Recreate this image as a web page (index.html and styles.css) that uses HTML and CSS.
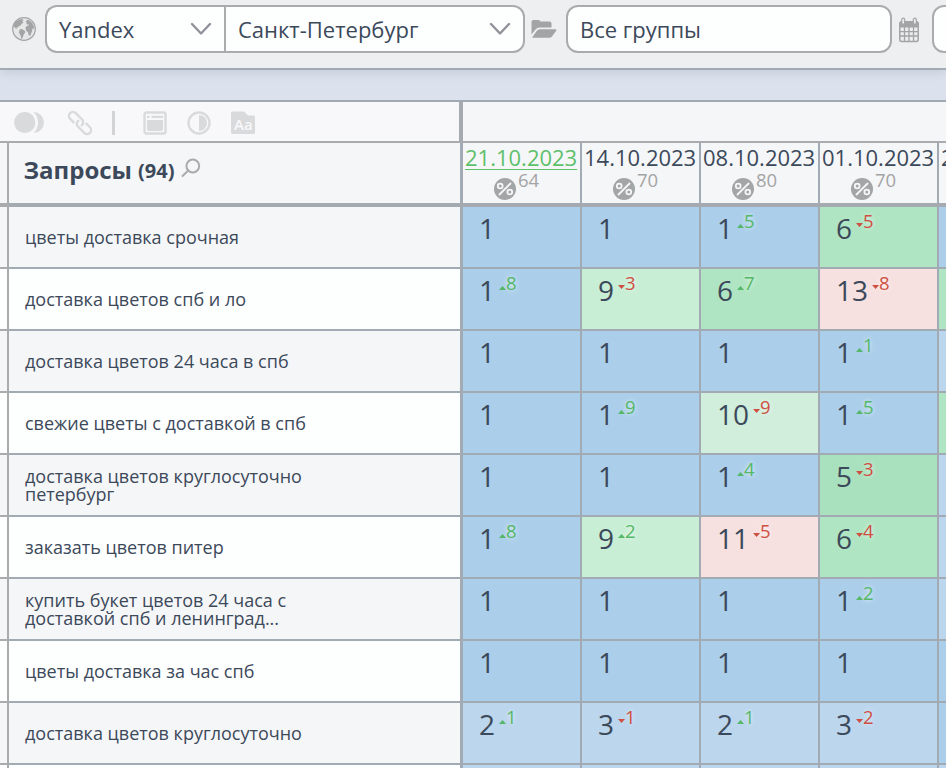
FILE: index.html
```
<!DOCTYPE html>
<html lang="ru">
<head>
    <meta charset="UTF-8">
    <meta name="viewport" content="width=device-width, initial-scale=1.0">
    <title>Позиции сайта</title>
    <link rel="stylesheet" href="styles.css">
</head>
<body>
    <header class="filters">
        <svg class="icon-globe" width="24" height="24" viewBox="0 0 24 24">
            <circle cx="12" cy="12" r="11.3" fill="#e6e6e7" stroke="#a3a4a5" stroke-width="1.2"/>
            <path fill="#a3a4a5" d="M1.500 8.500 4 4.600 7.500 2.500l3-.5 1 1.200-1.400.8 1.400 1.400-1.600 1.200-1.400 2-1.800.6-.8 1.600-1.500-.8.5 2L4 11.400 2.200 10zM7.600 12.600l2.200-.6 2.600 1.600 1 1.500-1.700 2.300-.8 2.500-1.300 2.500-1-4-1.600-3zM14 4.600l1.200-1.800 2.300.6 2.700 2.600 1.700 3.400.4 2.400-1.600-.6-.8 3.200-1.500 4-1.600.2-.8-3.400-2-1.800-.5-2.700 1.600-1.900 1.800-.4-.2-1-1.700.2z"/>
        </svg>
        <div class="select-group">
            <div class="select engine">
                <span>Yandex</span>
                <svg width="22" height="14" viewBox="0 0 22 14"><path d="M2 2l9 9.500L20 2"/></svg>
            </div>
            <div class="select region">
                <span>Санкт-Петербург</span>
                <svg width="22" height="14" viewBox="0 0 22 14"><path d="M2 2l9 9.500L20 2"/></svg>
            </div>
        </div>
        <svg class="icon-folder" width="26" height="20" viewBox="0 0 26 20">
            <path fill="#a3a4a5" d="M.5 15.500V3a2 2 0 0 1 2-2h5a2 2 0 0 1 2 1.600h9A2 2 0 0 1 20.500 4.600V8.500H8.500a5 5 0 0 0-4 2z"/>
            <path fill="#a3a4a5" d="M1.200 18.500 5.500 12.300a4.500 4.500 0 0 1 3.600-2H24.500a.9.900 0 0 1 .7 1.500L21 17.500a3.500 3.500 0 0 1-2.600 1.200H1.500z"/>
        </svg>
        <div class="select groups"><span>Все группы</span></div>
        <svg class="icon-calendar" width="20" height="26" viewBox="0 0 20 26">
            <rect x=".8" y="4.800" width="18.400" height="19.600" rx="1.800" fill="#ededee" stroke="#a3a4a5" stroke-width="1.500"/>
            <path d="M.8 5h18.400v5.500H.8z" fill="#a3a4a5"/>
            <path d="M1 14.700h18M1 19h18M5.500 10v14M10 10v14M14.500 10v14" stroke="#a3a4a5" stroke-width="1.300"/>
            <rect x="2.700" y="1.200" width="3" height="6" rx="1.500" fill="#ededee" stroke="#a3a4a5" stroke-width="1.200"/>
            <rect x="14.300" y="1.200" width="3" height="6" rx="1.500" fill="#ededee" stroke="#a3a4a5" stroke-width="1.200"/>
        </svg>
        <div class="select dates"></div>
    </header>

    <main class="report">
        <div class="toolbar">
            <div class="tools">
                <svg class="tool-toggle" width="31" height="24" viewBox="0 0 31 24">
                    <circle cx="10.800" cy="11.500" r="10.600"/>
                    <path d="M19.500 1a10.500 10.500 0 0 1 0 21c6-5.500 6-15.500 0-21z"/>
                </svg>
                <svg class="tool-link" width="26" height="26" viewBox="0 0 26 26">
                    <g class="line" transform="rotate(45 13 13)">
                        <path d="M8 17H3a4 4 0 0 1 0-8h9a4 4 0 0 1 3.800 4.500"/>
                        <path d="M18 9h5a4 4 0 0 1 0 8h-9a4 4 0 0 1-3.800-4.500"/>
                    </g>
                </svg>
                <span class="divider"></span>
                <svg class="tool-window" width="24" height="24" viewBox="0 0 24 24">
                    <rect class="line" x="1.500" y="1.500" width="21" height="21" rx="2"/>
                    <path d="M4 4.800h2.500v2.200H4zM8.500 4.800H20v2.200H8.500zM4 9h16v9a2 2 0 0 1-2 2H6a2 2 0 0 1-2-2z"/>
                </svg>
                <svg class="tool-contrast" width="24" height="24" viewBox="0 0 24 24">
                    <circle class="line" cx="12" cy="12" r="10.500"/>
                    <path d="M12 4a8 8 0 0 1 0 16z"/>
                </svg>
                <svg class="tool-case" width="24" height="24" viewBox="0 0 24 24">
                    <path d="M0 2a1.500 1.500 0 0 1 1.500-1.500H13L17 4.500h5.500A1.500 1.500 0 0 1 24 6v15.500a1.500 1.500 0 0 1-1.500 1.500h-21A1.500 1.500 0 0 1 0 21.500z"/>
                    <text x="3" y="18.500">Aa</text>
                </svg>
            </div>
        </div>

        <div class="row head">
            <div class="gutter"></div>
            <div class="query">
                <span class="title">Запросы</span>
                <span class="count">(94)</span>
                <svg class="icon-search" width="20" height="20" viewBox="0 0 20 20">
                    <circle cx="11.800" cy="8" r="6.400"/><path d="M7.300 12.500 1.500 18"/>
                </svg>
            </div>
        </div>
    </main>

    <script>
        const dates = [
            ['21.10.2023', 64], ['14.10.2023', 70], ['08.10.2023', 80],
            ['01.10.2023', 70], ['24.09.2023', '']
        ];

        // cell: [position, change, colour class]
        const rows = [
            ['цветы доставка срочная', [[1], [1], [1, 5], [6, -5, 'g1'], ['']]],
            ['доставка цветов спб и ло', [[1, 8], [9, -3, 'g2'], [6, 7, 'g1'], [13, -8, 'red'], ['', 0, 'g1']]],
            ['доставка цветов 24 часа в спб', [[1], [1], [1], [1, 1], ['', 0, 'b2']]],
            ['свежие цветы с доставкой в спб', [[1], [1, 9], [10, -9, 'g3'], [1, 5], ['', 0, 'g1']]],
            ['доставка цветов круглосуточно<br>петербург', [[1], [1], [1, 4], [5, -3, 'g0'], ['', 0, 'b2']]],
            ['заказать цветов питер', [[1, 8], [9, 2, 'g2'], [11, -5, 'red'], [6, -4, 'g1'], ['', 0, 'b2']]],
            ['купить букет цветов 24 часа с<br>доставкой спб и ленинград...', [[1], [1], [1], [1, 2], ['', 0, 'b2']]],
            ['цветы доставка за час спб', [[1], [1], [1], [1], ['']]],
            ['доставка цветов круглосуточно', [[2, 1, 'b2'], [3, -1, 'b2'], [2, 1, 'b2'], [3, -2, 'b2'], ['']]],
            ['', [['', 0, 'b2'], ['', 0, 'b2'], ['', 0, 'b2'], ['', 0, 'b2'], ['', 0, 'b2']]]
        ];

        const percent = '<svg class="percent" width="22" height="22" viewBox="0 0 22 22">' +
            '<circle class="disc" cx="11" cy="11" r="11"/>' +
            '<circle cx="6.200" cy="8" r="2.400"/><circle cx="15.800" cy="14" r="2.400"/>' +
            '<path d="M16.500 5.500 5.500 16.500"/></svg>';

        document.querySelector('.head').insertAdjacentHTML('beforeend', dates.map(([date, value], i) =>
            `<div class="date${i === 0 ? ' active' : ''}"><span class="day">${date}</span>
            <div class="visibility">${percent}<span>${value}</span></div></div>`
        ).join(''));

        const change = (n) => n
            ? `<span class="change ${n > 0 ? 'up' : 'down'}"><i></i>${Math.abs(n)}</span>`
            : '';

        document.querySelector('.report').insertAdjacentHTML('beforeend', rows.map(([name, cells]) =>
            `<div class="row"><div class="gutter"></div><div class="query"><span>${name}</span></div>` +
            cells.map(([pos, diff, color]) =>
                `<div class="cell ${color || 'b1'}"><span class="pos">${pos}</span>${change(diff)}</div>`
            ).join('') + '</div>'
        ).join(''));
    </script>
</body>
</html>
```

FILE: styles.css
```
* { box-sizing: border-box; }
body {
    margin: 0;
    height: 768px;
    overflow: hidden;
    background: #dce2ed;
    color: #3c495a;
    font-family: "Open Sans", "Noto Sans", sans-serif;
}
svg { display: block; flex: none; overflow: visible; }

.filters {
    display: flex;
    align-items: flex-start;
    height: 70px;
    padding: 5px 0 0 12px;
    background: #eeeff1;
    border-bottom: 2px solid #a1abb5;
    box-shadow: 0 2px 10px rgba(90, 110, 130, 0.2);
}
.icon-globe { margin: 12px 9px 0 0; }
.select-group { display: flex; }
.select {
    display: flex;
    flex: none;
    align-items: center;
    justify-content: space-between;
    height: 48px;
    padding: 0 12px;
    border: 2px solid #a9abad;
    border-radius: 12px;
    background: #fdfefe;
    font-size: 22px;
    line-height: 30px;
    white-space: nowrap;
}
.select svg { fill: none; stroke: #8f9399; stroke-width: 2.4; stroke-linecap: round; stroke-linejoin: round; }
.engine { width: 179px; border-right: 0; border-radius: 12px 0 0 12px; }
.region { width: 301px; border-radius: 0 12px 12px 0; }
.icon-folder { margin: 14px 9px 0 6px; }
.groups { width: 326px; }
.icon-calendar { margin: 12px 13px 0 7px; }
.dates { width: 300px; }

.report {
    width: 1058px;
    margin-top: 30px;
    border-top: 2px solid #a1a9b3;
    background: #f5f6f8;
}
.toolbar { height: 41px; border-bottom: 2px solid #a9abad; }
.tools {
    display: flex;
    align-items: center;
    width: 463px;
    height: 39px;
    padding: 3px 0 0 14px;
    border-right: 4px solid #a5aab0;
    background: #f8f8fa;
}
.tools svg { fill: #d9dadc; }
.tools .line { fill: none; stroke: #d9dadc; stroke-width: 2.4; stroke-linecap: round; }
.tool-link { margin-left: 22px; }
.divider { width: 3px; height: 24px; margin: 0 28px 0 19px; background: #d2d3d5; }
.tool-contrast { margin-left: 20px; }
.tool-case { margin-left: 20px; }
.tools text { fill: #f8f8fa; font-size: 15px; font-weight: 600; }

.row {
    display: grid;
    grid-template-columns: 9px 454px repeat(5, 119px);
    height: 62px;
    background: #fdfefe;
}
.row:nth-child(odd) { background: #f5f6f8; }
.row > div { border-right: 2px solid #a2abb4; border-bottom: 2px solid #a2abb4; }
.row > .gutter { border-color: #a9abad; }
.row > .query {
    display: flex;
    align-items: center;
    padding: 0 0 0 16px;
    border-right-width: 3px;
    font-size: 18px;
    line-height: 18px;
    white-space: nowrap;
}

.head { height: 64px; background: #f5f6f8; }
.head > div, .head > .query { border-bottom: 4px solid #a4aaaf; }
.head > .query { align-items: flex-start; padding: 11px 0 0 14.5px; font-weight: 700; line-height: 32px; }
.title { font-size: 24px; }
.count { margin-left: 6px; font-size: 20px; line-height: 34px; }
.icon-search { margin: 4px 0 0 7px; fill: none; stroke: #a9abad; stroke-width: 2; stroke-linecap: round; }
.head > .date { padding-left: 2px; }
.day { display: block; margin-top: -1px; font-size: 22px; line-height: 30px; }
.active .day { color: #5ec06a; text-decoration: underline; text-decoration-thickness: 1px; text-underline-offset: 3px; }
.visibility { display: flex; padding-left: 29px; color: #a3a4a5; font-size: 18.5px; line-height: 18px; }
.percent { margin: 6px 2px 0 0; fill: none; stroke: #f5f6f8; stroke-width: 1.8; stroke-linecap: round; }
.percent .disc { fill: #a2a6a6; stroke: none; }
.visibility span { margin-top: -1px; }

.cell { display: flex; align-items: flex-start; padding-left: 16px; }
.pos { padding-top: 2px; font-size: 28px; line-height: 38px; }
.change {
    display: flex;
    margin-left: 4px;
    padding-top: 4px;
    font-size: 18.5px;
    line-height: 20px;
    text-shadow: 0 0 5px rgba(255, 255, 255, 0.8);
}
.change i { width: 7px; height: 4px; margin-top: 13px; clip-path: polygon(50% 0, 100% 100%, 0 100%); background: currentColor; }
.up { color: #55b868; }
.down { color: #cf4f43; }
.down i { margin-top: 12px; clip-path: polygon(0 0, 100% 0, 50% 100%); }

.b1 { background: #abcfea; }
.b2 { background: #bbd6ed; }
.g0 { background: #a9e0bd; }
.g1 { background: #afe5c2; }
.g2 { background: #c8eed5; }
.g3 { background: #d0eedb; }
.red { background: #f6e1e0; }
```
